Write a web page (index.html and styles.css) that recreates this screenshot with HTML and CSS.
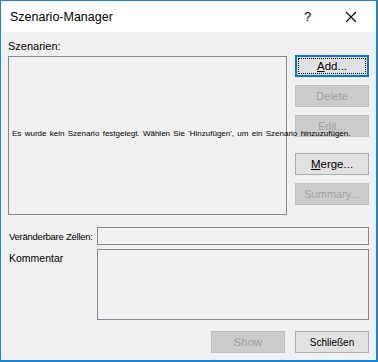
FILE: index.html
```html
<!doctype html>
<html>
	<head>
		<title>Szenario-Manager</title>
		<meta charset="utf-8">
		<link rel="stylesheet" href="styles.css">
	</head>
	<body>
		<div class="window">
			<div class="titlebar">
				<span class="title">Szenario-Manager</span>
				<span class="help">?</span>
				<span class="close">
					<svg width="12" height="12" viewBox="0 0 12 12"><path d="M1 1 L11 11 M11 1 L1 11" stroke="#000" stroke-width="1.1" fill="none"/></svg>
				</span>
			</div>
			<div class="content">
				<div class="label top">Szenarien:</div>
				<div class="mainRow">
					<div class="listBox">
						<div class="emptyMsg">Es wurde kein Szenario festgelegt. Wählen Sie 'Hinzufügen', um ein Szenario hinzuzufügen.</div>
					</div>
					<div class="btnCol">
						<div class="btn focus"><span class="dots"><u>A</u>dd...</span></div>
						<div class="btn off">Delete</div>
						<div class="btn off">Edit...</div>
						<div class="btn gapBefore"><u>M</u>erge...</div>
						<div class="btn off">Summary...</div>
					</div>
				</div>
				<div class="fieldRow">
					<div class="label fieldLabel">Veränderbare Zellen:</div>
					<div class="inputBox"></div>
				</div>
				<div class="fieldRow comment">
					<div class="label fieldLabel">Kommentar</div>
					<div class="commentBox"></div>
				</div>
				<div class="bottomRow">
					<div class="btn off">Show</div>
					<div class="btn small">Schließen</div>
				</div>
			</div>
		</div>
	</body>
</html>
```

FILE: styles.css
```css
body{
	margin:0px;
	padding:0px;
	font-family:"Liberation Sans", Arial, sans-serif;
}

/** 窗口外框 **/
.window{
	width:378px;
	height:362px;
	box-sizing:border-box;
	border:1px solid #1883d7;
	border-right-width:2px;
	border-bottom-width:2px;
	background:#f0f0f0;
	display:flex;
	flex-direction:column;
}

/** 标题栏 **/
.titlebar{
	height:31px;
	background:#fff;
	display:flex;
	align-items:center;
	padding-left:9px;
}
.title{
	font-size:12.5px;
	color:#000;
	flex:1;
}
.help{
	font-size:13px;
	width:20px;
	margin-right:21px;
}
.close{
	display:flex;
	width:12px;
	margin-right:19px;
}

.content{
	flex:1;
	padding:0px 7px 0px 7px;
	display:flex;
	flex-direction:column;
}

.label{
	font-size:11px;
	color:#000;
	line-height:14px;
	white-space:nowrap;
}
.top{
	margin-top:7px;
	margin-bottom:3px;
}

/** 列表 + 按钮 **/
.mainRow{
	display:flex;
}
.listBox{
	width:279px;
	height:159px;
	box-sizing:border-box;
	border:1px solid #828790;
	position:relative;
}
.emptyMsg{
	position:absolute;			/** 文字溢出到按钮上方 **/
	left:3px;
	top:72px;
	white-space:nowrap;
	font-size:8px;
	word-spacing:1.1px;
	z-index:2;
}

.btnCol{
	margin-left:8px;
	display:flex;
	flex-direction:column;
	gap:8px;
	margin-top:-1px;
}

.btn{
	width:74px;
	height:22px;
	box-sizing:border-box;
	border:1px solid #adadad;
	background:#e1e1e1;
	font-size:11px;
	display:flex;
	align-items:center;
	justify-content:center;
}
.btn.off{
	background:#cccccc;
	border-color:#bfbfbf;
	color:#a0a0a0;
}
.btn.focus{
	border:2px solid #0078d7;
	padding:1px;
}
.dots{
	flex:1;
	align-self:stretch;
	border:1px dotted #000;
	display:flex;
	align-items:center;
	justify-content:center;
	font-size:11.5px;
}
.gapBefore{
	margin-top:8px;
	font-size:11.5px;
}
.btn.small{
	font-size:10px;
}

/** 下方输入区 **/
.fieldRow{
	display:flex;
	margin-top:12px;
}
.fieldRow.comment{
	margin-top:4px;
}
.fieldLabel{
	width:88px;
	margin-left:1px;
	padding-top:3px;
	font-size:9.5px;
	letter-spacing:-0.25px;
}
.inputBox{
	width:274px;
	height:18px;
	box-sizing:border-box;
	border:1px solid #828790;
}
.comment .fieldLabel{
	padding-top:2px;
	font-size:10.5px;
	letter-spacing:0px;
}
.commentBox{
	width:274px;
	height:71px;
	box-sizing:border-box;
	border:1px solid #828790;
}

.bottomRow{
	display:flex;
	justify-content:flex-end;
	gap:10px;
	margin-top:11px;
	padding-right:0px;
}
.bottomRow .btn.off{
	font-size:11.5px;
}
```
